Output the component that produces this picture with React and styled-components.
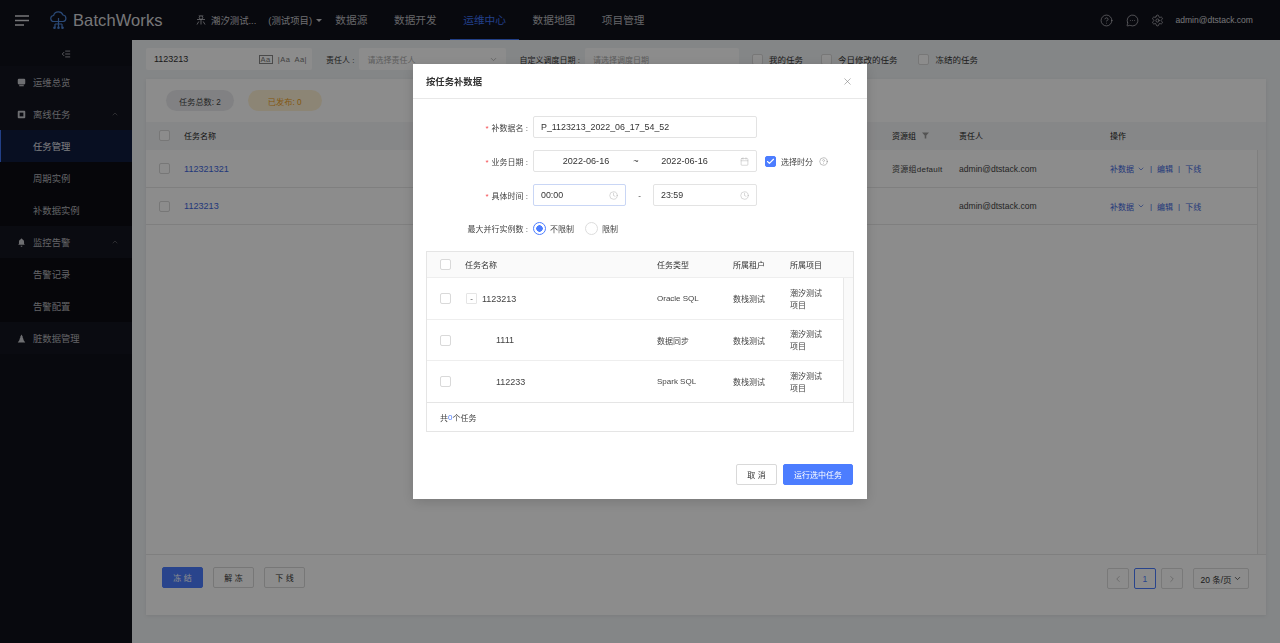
import React from 'react'
import styled, { createGlobalStyle } from 'styled-components'
import {
  Calendar,
  Check,
  ChevronDown,
  ChevronLeft,
  ChevronRight,
  ChevronUp,
  CircleHelp,
  Clock,
  IndentDecrease,
  MessageCircleMore,
  Settings,
  X,
} from 'lucide-react'

const FONT = `"Liberation Sans", "Noto Sans CJK SC", sans-serif`
const BLUE = '#4c7dff'
const LINK = '#3f68e0'

const GlobalStyle = createGlobalStyle`
  html, body {
    margin: 0;
    padding: 0;
    height: 100%;
    overflow: hidden;
  }
  * {
    box-sizing: border-box;
  }
  body {
    font-family: ${FONT};
    font-size: 8px;
    color: #333;
    background: #f1f4f6;
  }
`

const Page = styled.div`
  width: 1280px;
  height: 643px;
  display: flex;
  flex-direction: column;
  overflow: hidden;
`

/* top bar */
const TopBar = styled.header`
  height: 40px;
  flex: none;
  display: flex;
  align-items: center;
  background: #10111b;
  color: #d5d6da;
  padding-right: 27px;
`
const Burger = styled.svg`
  width: 14px;
  height: 11px;
  margin-left: 15px;
  flex: none;
`
const Logo = styled.svg`
  width: 17px;
  height: 19px;
  margin-left: 21px;
  flex: none;
`
const Brand = styled.span`
  font-size: 16.5px;
  margin-left: 6px;
  width: 123px;
  flex: none;
  color: #d8d9dc;
  letter-spacing: 0.1px;
`
const Project = styled.div`
  display: flex;
  align-items: center;
  font-size: 9.4px;
  width: 126px;
  flex: none;
  color: #c8c9ce;
  white-space: nowrap;
  svg {
    flex: none;
  }
`
const ProjectName = styled.span`
  margin: 0 12px 0 5px;
`
const Caret = styled.i`
  margin-left: 4px;
  border: 3px solid transparent;
  border-top: 3.5px solid #c8c9ce;
  border-bottom: 0;
`
const Nav = styled.nav`
  display: flex;
  height: 100%;
`
const NavItem = styled.a`
  display: flex;
  align-items: center;
  padding: 0 13.33px;
  font-size: 10.67px;
  color: ${(p) => (p.$active ? '#3f74f5' : '#b8b9be')};
  border-bottom: 1.5px solid ${(p) => (p.$active ? '#3f74f5' : 'transparent')};
`
const TopRight = styled.div`
  margin-left: auto;
  display: flex;
  align-items: center;
  gap: 12.5px;
  color: #d5d6da;
`
const Email = styled.span`
  font-size: 8.55px;
  margin-left: -1.5px;
`

/* body */
const Body = styled.div`
  flex: 1;
  display: flex;
  min-height: 0;
`
const Side = styled.aside`
  width: 132px;
  flex: none;
  background: #10111b;
  color: #c2c3c8;
`
const Collapse = styled.div`
  height: 26px;
  padding-top: 2px;
  display: flex;
  align-items: center;
  justify-content: center;
  color: #b9bac0;
`
const MenuRow = styled.div`
  height: 32px;
  display: flex;
  align-items: center;
  font-size: 9.33px;
  padding-left: ${(p) => (p.$sub ? '33px' : '17px')};
  padding-right: 13px;
  background: ${(p) => (p.$active ? '#0f1c3f' : p.$sub ? '#0b0c13' : '#13141f')};
  color: ${(p) => (p.$active ? '#e6e7ea' : '#b4b5bb')};
  box-shadow: ${(p) => (p.$active ? 'inset 1px 0 0 #3f74f5' : 'none')};
`
const MenuIcon = styled.svg`
  width: 9px;
  height: 9px;
  margin-right: 7px;
  flex: none;
`
const MenuArrow = styled(ChevronUp)`
  margin-left: auto;
  color: #6f7076;
`
const Main = styled.main`
  flex: 1;
  min-width: 0;
  padding: 8px 14px 28px;
  display: flex;
  flex-direction: column;
`
const Filters = styled.div`
  height: 22px;
  flex: none;
  display: flex;
  align-items: center;
  margin-bottom: 9px;
  font-size: 8px;
`
const FilterBox = styled.div`
  height: 22px;
  width: ${(p) => p.$w}px;
  flex: none;
  background: #fff;
  border-radius: 2px;
  display: flex;
  align-items: center;
  padding: 0 8px;
  color: ${(p) => (p.$muted ? '#aaa' : '#333')};
  font-size: ${(p) => (p.$muted ? '8px' : '9px')};
`
const CaseIcons = styled.span`
  margin-left: auto;
  margin-right: -3px;
  display: flex;
  align-items: center;
  gap: 4px;
  font-size: 7.5px;
  letter-spacing: 0.5px;
  color: #777;
`
const CaseBox = styled.span`
  border: 1px solid #888;
  padding: 0 1px;
  margin-right: 1px;
  line-height: 7px;
`
const FilterLabel = styled.span`
  margin: 0 5px 0 ${(p) => p.$gap}px;
  color: #333;
`
const CheckLabel = styled.label`
  display: flex;
  align-items: center;
  margin-left: ${(p) => p.$gap}px;
  color: #333;
  font-size: 8.5px;
  gap: 6px;
`
const Box = styled.span`
  width: 11px;
  height: 11px;
  flex: none;
  display: inline-flex;
  align-items: center;
  justify-content: center;
  border: 1px solid ${(p) => (p.$on ? BLUE : '#d9d9d9')};
  border-radius: 2px;
  background: ${(p) => (p.$on ? BLUE : '#fff')};
  color: #fff;
`
const Card = styled.section`
  flex: 1;
  background: #fff;
  display: flex;
  flex-direction: column;
  box-shadow: 0 1px 4px rgba(0, 0, 0, 0.08);
`
const Stats = styled.div`
  height: 43px;
  flex: none;
  display: flex;
  align-items: center;
  gap: 14px;
  padding: 0 20px;
`
const Pill = styled.span`
  height: 21px;
  padding: 0 ${(p) => (p.$warn ? '20px' : '13px')};
  display: flex;
  align-items: center;
  border-radius: 11px;
  font-size: 8.2px;
  background: ${(p) => (p.$warn ? '#fff3d6' : '#ebecef')};
  color: ${(p) => (p.$warn ? '#f0a020' : '#444')};
`
const BgHead = styled.div`
  height: 28px;
  flex: none;
  display: grid;
  grid-template-columns: 38px 708px 67px 151px 156px;
  align-items: center;
  background: #f5f6f8;
  font-size: 8px;
  color: #222;
  padding-bottom: 2px;
`
const BgBody = styled.div`
  flex: 1;
  display: flex;
  min-height: 0;
  border-bottom: 1px solid #e8e8e8;
`
const BgRows = styled.div`
  flex: 1;
  min-width: 0;
`
const Gutter = styled.div`
  width: ${(p) => p.$w}px;
  flex: none;
  background: #fafafa;
  border-left: 1px solid #e8e8e8;
`
const BgRow = styled.div`
  height: ${(p) => p.$h}px;
  display: grid;
  grid-template-columns: 38px 708px 67px 151px 147px;
  align-items: center;
  border-bottom: 1px solid #e8e8e8;
  font-size: 8.55px;
  color: #444;
`
const CheckCell = styled.span`
  padding-left: 13px;
  display: flex;
  align-items: center;
`
const Link = styled.a`
  color: ${LINK};
  font-size: 9.1px;
`
const GroupCell = styled.span`
  font-size: 8px;
  letter-spacing: 0.25px;
`
const HeadWithIcon = styled.span`
  display: flex;
  align-items: center;
  gap: 6px;
`
const Actions = styled.span`
  display: flex;
  align-items: center;
  color: ${LINK};
  font-size: 8px;
  gap: 5px;
`
const ActionArrow = styled(ChevronDown)`
  margin-left: -2px;
`
const CardFooter = styled.div`
  height: 60px;
  flex: none;
  display: flex;
  align-items: center;
  padding: 0 17px 16px 16px;
`
const Btn = styled.button`
  font-family: ${FONT};
  height: 21px;
  width: ${(p) => p.$w}px;
  padding: 0;
  margin-right: ${(p) => p.$mr || 0}px;
  font-size: 8px;
  letter-spacing: ${(p) => (p.$spaced ? '2.5px' : '0')};
  text-indent: ${(p) => (p.$spaced ? '2.5px' : '0')};
  border-radius: 2px;
  border: 1px solid ${(p) => (p.$primary ? BLUE : '#d9d9d9')};
  background: ${(p) => (p.$primary ? BLUE : '#fff')};
  color: ${(p) => (p.$primary ? '#fff' : '#333')};
  flex: none;
`
const Pager = styled.div`
  margin-left: auto;
  margin-top: 3px;
  display: flex;
  align-items: center;
  gap: 5.5px;
`
const PageBtn = styled.span`
  width: 21.5px;
  height: 21px;
  display: flex;
  align-items: center;
  justify-content: center;
  border: 1px solid ${(p) => (p.$active ? BLUE : '#dcdcdc')};
  border-radius: 2px;
  color: ${(p) => (p.$active ? BLUE : '#bbb')};
  font-size: 8.5px;
`
const PageSize = styled.span`
  margin-left: 5px;
  width: 56px;
  height: 21px;
  display: flex;
  align-items: center;
  justify-content: center;
  gap: 1px;
  border: 1px solid #dcdcdc;
  border-radius: 2px;
  font-size: 8.5px;
  color: #333;
`

/* dialog */
const Overlay = styled.div`
  position: fixed;
  inset: 0;
  background: rgba(0, 0, 0, 0.45);
  display: flex;
  justify-content: center;
  align-items: flex-start;
  padding-top: 64px;
`
const Dialog = styled.div`
  width: 454px;
  height: 435px;
  background: #fff;
  display: flex;
  flex-direction: column;
  box-shadow: 0 3px 12px rgba(0, 0, 0, 0.15);
`
const DialogTitle = styled.div`
  height: 35px;
  flex: none;
  display: flex;
  align-items: center;
  justify-content: space-between;
  padding: 0 14px 0 13px;
  border-bottom: 1px solid #e8e8e8;
  font-size: 9.33px;
  font-weight: 700;
  color: #333;
  svg {
    color: #777;
  }
`
const Form = styled.div`
  padding-top: 17px;
  display: flex;
  flex-direction: column;
`
const FormRow = styled.div`
  height: 22px;
  margin-bottom: ${(p) => p.$mb}px;
  display: flex;
  align-items: center;
  font-size: 8px;
  color: #444;
`
const FormLabel = styled.span`
  width: 115px;
  margin-right: 5px;
  flex: none;
  text-align: right;
`
const Star = styled.span`
  color: #f5484d;
  margin-right: 3px;
`
const Field = styled.div`
  height: 22px;
  width: ${(p) => p.$w}px;
  flex: none;
  display: flex;
  align-items: center;
  border: 1px solid ${(p) => (p.$focus ? '#c9d6f5' : '#e3e3e3')};
  border-radius: 2px;
  padding: 0 7px;
  color: #333;
  font-size: 8.85px;
  svg {
    margin-left: auto;
    color: #aaa;
    flex: none;
  }
`
const DateText = styled.span`
  width: ${(p) => p.$w}px;
  text-align: center;
  flex: none;
  font-size: 9.1px;
`
const TimeDash = styled.span`
  width: 27px;
  text-align: center;
  color: #333;
`
const TimeToggle = styled.span`
  display: flex;
  align-items: center;
  margin-left: 8px;
  gap: 5px;
  color: #444;
  > svg {
    color: #777;
    margin-left: 1px;
  }
`
const Radio = styled.span`
  display: inline-flex;
  align-items: center;
  gap: 4px;
  margin-right: 11px;
  &::before {
    content: '';
    width: 11px;
    height: 11px;
    border-radius: 50%;
    border: 1px solid ${(p) => (p.$on ? BLUE : '#ddd')};
    background: ${(p) => (p.$on ? `radial-gradient(circle, ${BLUE} 3px, #fff 3.5px)` : '#fff')};
  }
`
const TaskTable = styled.div`
  margin: 0 13px;
  height: 181px;
  flex: none;
  border: 1px solid #e5e5e5;
  display: flex;
  flex-direction: column;
`
const TaskGrid = styled.div`
  display: grid;
  grid-template-columns: 38px 192px 76px 57px 52px;
  align-items: center;
  font-size: 8px;
  color: #444;
`
const TaskHead = styled(TaskGrid)`
  height: 26px;
  flex: none;
  background: #fafafa;
  border-bottom: 1px solid #eee;
  color: #333;
`
const TaskBody = styled.div`
  display: flex;
  border-bottom: 1px solid #e5e5e5;
  flex: none;
`
const TaskRows = styled.div`
  flex: 1;
`
const TaskRow = styled(TaskGrid)`
  height: ${(p) => p.$h}px;
  border-bottom: ${(p) => (p.$last ? '0' : '1px solid #eee')};
`
const NameCell = styled.span`
  display: flex;
  align-items: center;
  padding-left: ${(p) => (p.$child ? '31px' : '1px')};
  font-size: 9px;
`
const Expand = styled.span`
  width: 11px;
  height: 11px;
  margin-right: 5px;
  border: 1px solid #e5e5e5;
  border-radius: 1px;
  display: flex;
  align-items: center;
  justify-content: center;
  font-size: 8px;
  line-height: 1;
`
const ProjectCell = styled.span`
  width: 34px;
  line-height: 12px;
  padding-top: 2px;
`
const TaskCount = styled.div`
  flex: 1;
  display: flex;
  align-items: center;
  padding-left: 13px;
  font-size: 8px;
  color: #444;
  em {
    font-style: normal;
    color: ${BLUE};
  }
`
const DialogFooter = styled.div`
  margin-top: auto;
  height: 35px;
  padding: 0 14px 14px 0;
  flex: none;
  display: flex;
  justify-content: flex-end;
  gap: 6px;
`

const filledIcons = {
  overview: (
    <>
      <rect x="1" y="1" width="10" height="7.5" rx="1.5" fill="currentColor" />
      <rect x="3" y="9.5" width="6" height="1.5" fill="currentColor" />
    </>
  ),
  task: (
    <>
      <rect x="1" y="1" width="10" height="10" rx="1.2" fill="currentColor" />
      <rect x="3.5" y="3.5" width="5" height="5" fill="#13141f" />
    </>
  ),
  bell: (
    <path d="M6 .8a1 1 0 0 1 1 1c1.6.5 2.4 1.8 2.4 3.6v2.4l1 1.3H1.6l1-1.3V5.4C2.6 3.6 3.400 2.300 5 1.800a1 1 0 0 1 1-1zM4.700 10.200h2.600a1.300 1.300 0 0 1-2.600 0z" fill="currentColor" />
  ),
  dirty: <path d="M6 .8 8 4.300H7.300L9 7.400H8.200L11 11.200H1L3.800 7.400H3L4.700 4.300H4z" fill="currentColor" />,
}

function SideIcon({ name }) {
  return (
    <MenuIcon viewBox="0 0 12 12" style={{ color: '#c9cad0' }}>
      {filledIcons[name]}
    </MenuIcon>
  )
}

const Checkbox = ({ on }) => <Box $on={on}>{on && <Check size={9} strokeWidth={3} />}</Box>

const bgRows = [
  { id: '112321321', group: '资源组default', h: 38 },
  { id: '1123213', group: '', h: 37 },
]

const tasks = [
  { name: '1123213', type: 'Oracle SQL', h: 42, root: true },
  { name: '1111', type: '数据同步', h: 41 },
  { name: '112233', type: 'Spark SQL', h: 41, last: true },
]

function App() {
  return (
    <>
      <GlobalStyle />
      <Page>
        <TopBar>
          <Burger viewBox="0 0 14 11">
            <path d="M0 1h14M0 5.500h14M0 10h9" stroke="#d8d9dc" strokeWidth="1.300" />
          </Burger>
          <Logo viewBox="0 0 17 19" fill="none" stroke="#4d86d8" strokeWidth="1.200">
            <path d="M4.500 10.500H4a3 3 0 0 1-.4-6A5 5 0 0 1 13 4a3.300 3.300 0 0 1 .300 6.500h-.800" />
            <path d="M3 10.500h11M8.500 7v9M5 13h7M5 13v3M12 13v3" />
            <circle cx="4.500" cy="16.800" r="1.300" fill="#4d86d8" stroke="none" />
            <circle cx="8.500" cy="16.800" r="1.300" fill="#4d86d8" stroke="none" />
            <circle cx="12.500" cy="16.800" r="1.300" fill="#4d86d8" stroke="none" />
          </Logo>
          <Brand>BatchWorks</Brand>
          <Project>
            <svg width="10" height="12" viewBox="0 0 10 12" fill="none" stroke="#c8c9ce" strokeWidth=".8">
              <circle cx="5" cy="3.500" r="1.800" />
              <path d="M5 5.500v5M2.800 7.500 1 10.500M7.200 7.500 9 10.500M1 5.500h8M3 1.300l1 1M7 1.300l-1 1" />
            </svg>
            <ProjectName>潮汐测试...</ProjectName>
            (测试项目)
            <Caret />
          </Project>
          <Nav>
            <NavItem>数据源</NavItem>
            <NavItem>数据开发</NavItem>
            <NavItem $active>运维中心</NavItem>
            <NavItem>数据地图</NavItem>
            <NavItem>项目管理</NavItem>
          </Nav>
          <TopRight>
            <CircleHelp size={13} strokeWidth={1.2} />
            <MessageCircleMore size={13} strokeWidth={1.2} />
            <Settings size={13} strokeWidth={1.2} />
            <Email>admin@dtstack.com</Email>
          </TopRight>
        </TopBar>
        <Body>
          <Side>
            <Collapse>
              <IndentDecrease size={10} />
            </Collapse>
            <MenuRow>
              <SideIcon name="overview" />
              运维总览
            </MenuRow>
            <MenuRow>
              <SideIcon name="task" />
              离线任务
              <MenuArrow size={8} />
            </MenuRow>
            <MenuRow $sub $active>
              任务管理
            </MenuRow>
            <MenuRow $sub>周期实例</MenuRow>
            <MenuRow $sub>补数据实例</MenuRow>
            <MenuRow>
              <SideIcon name="bell" />
              监控告警
              <MenuArrow size={8} />
            </MenuRow>
            <MenuRow $sub>告警记录</MenuRow>
            <MenuRow $sub>告警配置</MenuRow>
            <MenuRow>
              <SideIcon name="dirty" />
              脏数据管理
            </MenuRow>
          </Side>
          <Main>
            <Filters>
              <FilterBox $w={166}>
                1123213
                <CaseIcons>
                  <CaseBox>Aa</CaseBox>
                  <span>|Aa</span>
                  <span>Aa|</span>
                </CaseIcons>
              </FilterBox>
              <FilterLabel $gap={14}>责任人 :</FilterLabel>
              <FilterBox $w={147} $muted>
                请选择责任人
                <ChevronDown size={9} style={{ marginLeft: 'auto' }} />
              </FilterBox>
              <FilterLabel $gap={13}>自定义调度日期 :</FilterLabel>
              <FilterBox $w={154} $muted>
                请选择调度日期
              </FilterBox>
              <CheckLabel $gap={13}>
                <Checkbox />
                我的任务
              </CheckLabel>
              <CheckLabel $gap={18}>
                <Checkbox />
                今日修改的任务
              </CheckLabel>
              <CheckLabel $gap={21}>
                <Checkbox />
                冻结的任务
              </CheckLabel>
            </Filters>
            <Card>
              <Stats>
                <Pill>任务总数: 2</Pill>
                <Pill $warn>已发布: 0</Pill>
              </Stats>
              <BgHead>
                <CheckCell>
                  <Checkbox />
                </CheckCell>
                <span>任务名称</span>
                <HeadWithIcon>
                  资源组
                  <svg width="7" height="7" viewBox="0 0 7 7">
                    <path d="M0 .5h7L4.300 3.500V6.500H2.700V3.500z" fill="#999" />
                  </svg>
                </HeadWithIcon>
                <span>责任人</span>
                <span>操作</span>
              </BgHead>
              <BgBody>
                <BgRows>
                  {bgRows.map((row) => (
                    <BgRow key={row.id} $h={row.h}>
                      <CheckCell>
                        <Checkbox />
                      </CheckCell>
                      <Link>{row.id}</Link>
                      <GroupCell>{row.group}</GroupCell>
                      <span>admin@dtstack.com</span>
                      <Actions>
                        补数据
                        <ActionArrow size={8} />
                        <span>|</span>
                        编辑
                        <span>|</span>
                        下线
                      </Actions>
                    </BgRow>
                  ))}
                </BgRows>
                <Gutter $w={9} />
              </BgBody>
              <CardFooter>
                <Btn $primary $spaced $w={41} $mr={10}>
                  冻结
                </Btn>
                <Btn $spaced $w={41} $mr={10}>
                  解冻
                </Btn>
                <Btn $spaced $w={41}>
                  下线
                </Btn>
                <Pager>
                  <PageBtn>
                    <ChevronLeft size={10} />
                  </PageBtn>
                  <PageBtn $active>1</PageBtn>
                  <PageBtn>
                    <ChevronRight size={10} />
                  </PageBtn>
                  <PageSize>
                    20 条/页
                    <ChevronDown size={9} />
                  </PageSize>
                </Pager>
              </CardFooter>
            </Card>
          </Main>
        </Body>
      </Page>
      <Overlay>
        <Dialog>
          <DialogTitle>
            按任务补数据
            <X size={11} strokeWidth={1.2} />
          </DialogTitle>
          <Form>
            <FormRow $mb={12}>
              <FormLabel>
                <Star>*</Star>补数据名 :
              </FormLabel>
              <Field $w={224}>P_1123213_2022_06_17_54_52</Field>
            </FormRow>
            <FormRow $mb={12}>
              <FormLabel>
                <Star>*</Star>业务日期 :
              </FormLabel>
              <Field $w={224}>
                <DateText $w={90}>2022-06-16</DateText>
                <DateText $w={10}>~</DateText>
                <DateText $w={87}>2022-06-16</DateText>
                <Calendar size={9} strokeWidth={1.2} />
              </Field>
              <TimeToggle>
                <Checkbox on />
                选择时分
                <CircleHelp size={9} strokeWidth={1.2} />
              </TimeToggle>
            </FormRow>
            <FormRow $mb={11}>
              <FormLabel>
                <Star>*</Star>具体时间 :
              </FormLabel>
              <Field $w={93} $focus>
                00:00
                <Clock size={9} strokeWidth={1.2} />
              </Field>
              <TimeDash>-</TimeDash>
              <Field $w={104}>
                23:59
                <Clock size={9} strokeWidth={1.2} />
              </Field>
            </FormRow>
            <FormRow $mb={12}>
              <FormLabel>最大并行实例数 :</FormLabel>
              <Radio $on>不限制</Radio>
              <Radio>限制</Radio>
            </FormRow>
            <TaskTable>
              <TaskHead>
                <CheckCell>
                  <Checkbox />
                </CheckCell>
                <span>任务名称</span>
                <span>任务类型</span>
                <span>所属租户</span>
                <span>所属项目</span>
              </TaskHead>
              <TaskBody>
                <TaskRows>
                  {tasks.map((task) => (
                    <TaskRow key={task.name} $h={task.h} $last={task.last}>
                      <CheckCell>
                        <Checkbox />
                      </CheckCell>
                      <NameCell $child={!task.root}>
                        {task.root && <Expand>-</Expand>}
                        {task.name}
                      </NameCell>
                      <span>{task.type}</span>
                      <span>数栈测试</span>
                      <ProjectCell>潮汐测试项目</ProjectCell>
                    </TaskRow>
                  ))}
                </TaskRows>
                <Gutter $w={10} />
              </TaskBody>
              <TaskCount>
                共<em>0</em>个任务
              </TaskCount>
            </TaskTable>
          </Form>
          <DialogFooter>
            <Btn $w={41} $spaced>
              取消
            </Btn>
            <Btn $w={70} $primary>
              运行选中任务
            </Btn>
          </DialogFooter>
        </Dialog>
      </Overlay>
    </>
  )
}

export default App
